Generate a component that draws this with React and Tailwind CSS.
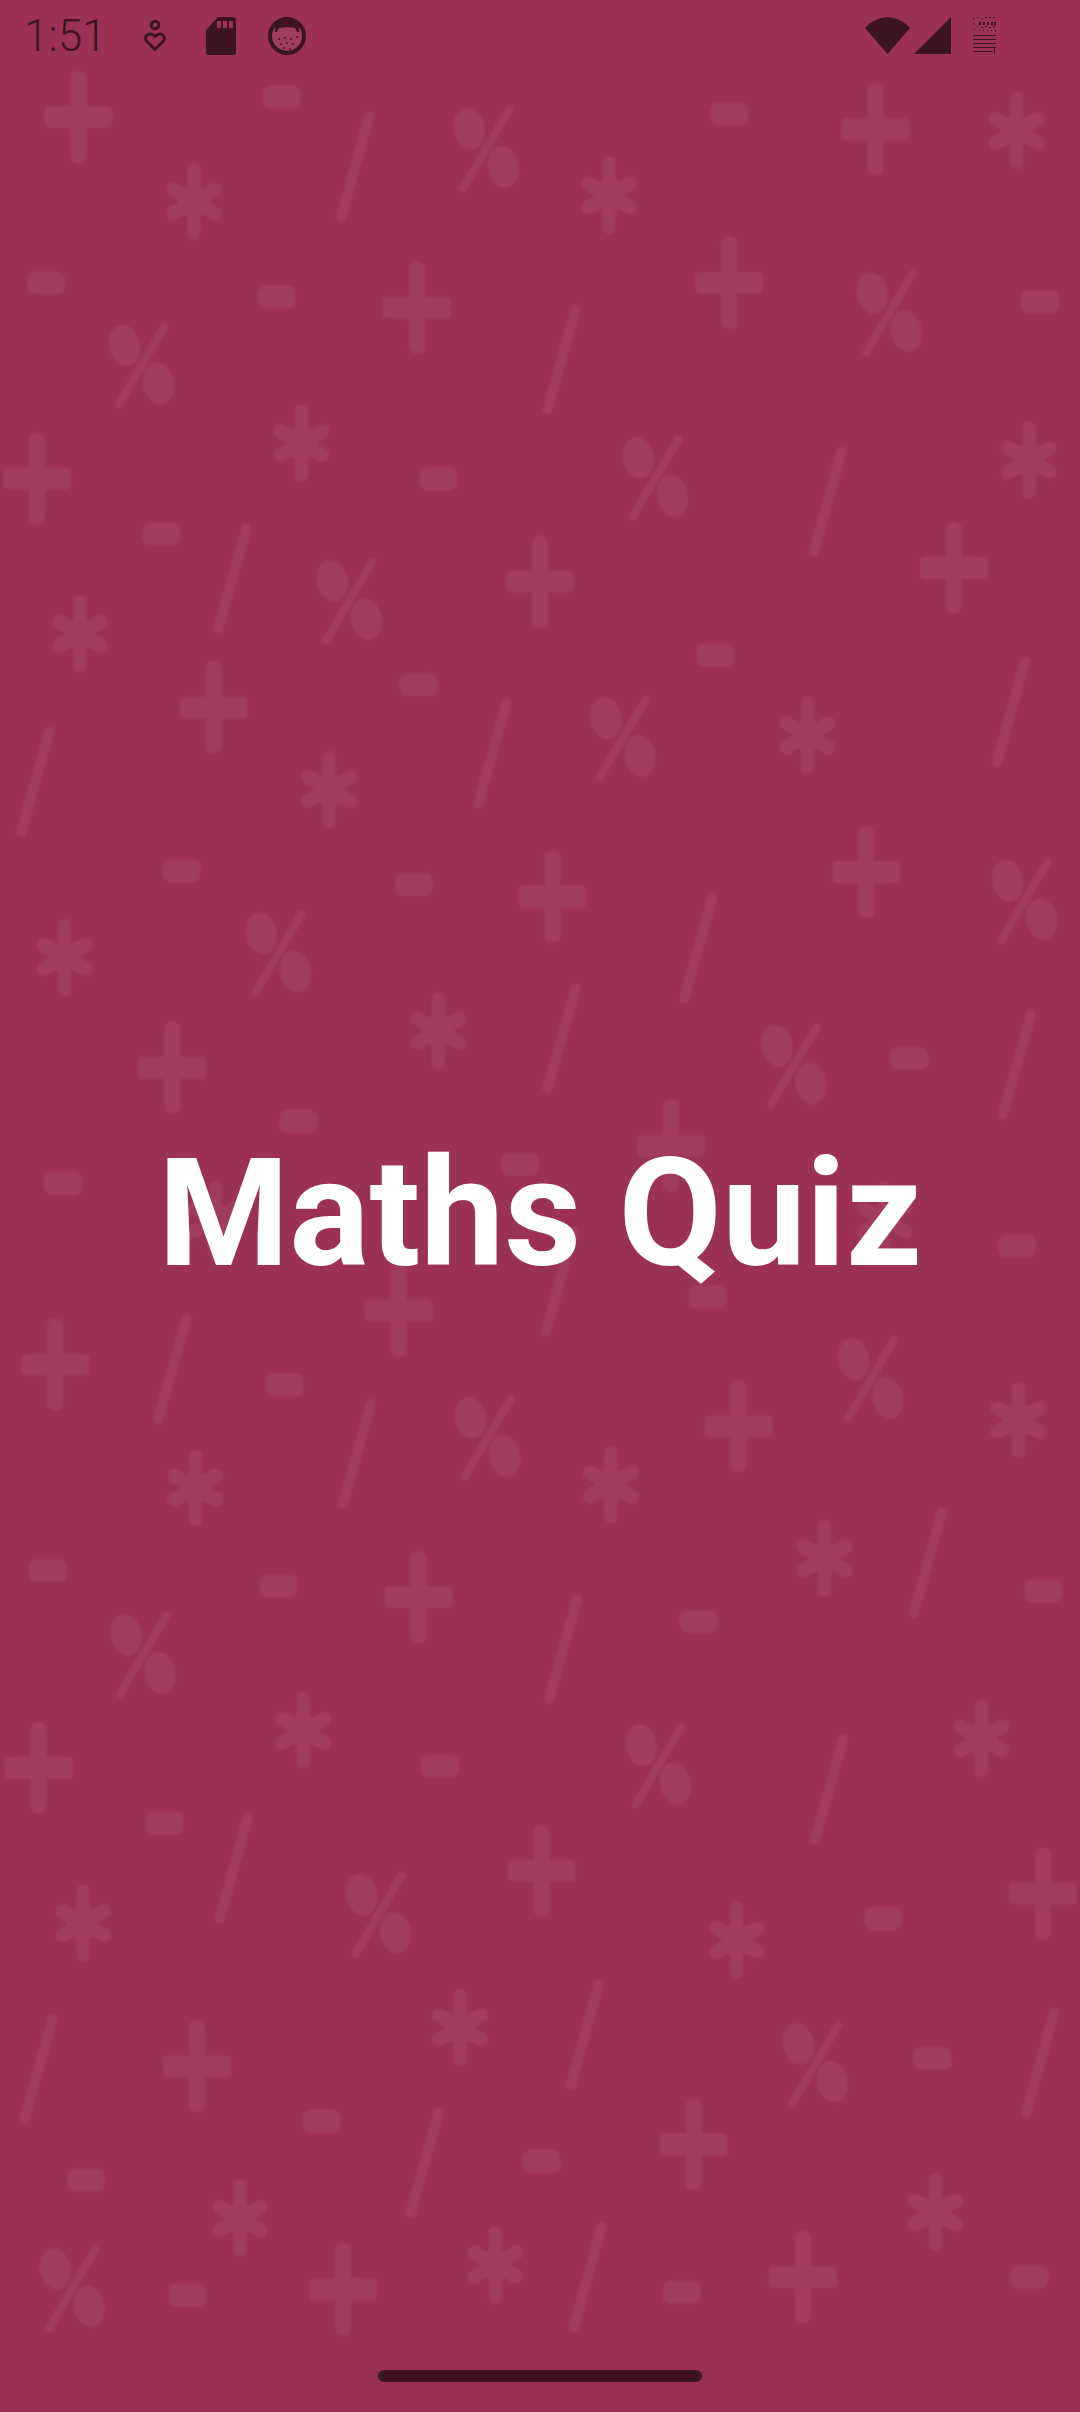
const k = 1080 / 702;
const plus = [[51,76],[569,84],[271,200],[474,184],[24,311],[351,378],[620,369],[139,460],[359,583],[563,567],[112,694],[436,745],[259,852],[36,887],[480,927],[272,1038],[25,1149],[352,1216],[678,1231],[128,1343],[451,1394],[223,1488],[522,1480]];
const minus = [[183,63],[474,74],[30,184],[180,193],[676,196],[285,311],[105,347],[272,445],[465,426],[118,566],[269,575],[591,688],[194,729],[338,757],[41,769],[661,810],[460,843],[185,900],[31,1021],[181,1031],[454,1054],[678,1034],[286,1148],[107,1185],[574,1247],[209,1379],[606,1338],[56,1417],[352,1405],[122,1492],[443,1490],[669,1480]];
const slash = [[231,108],[365,234],[538,326],[151,376],[320,490],[657,463],[23,508],[454,616],[365,675],[661,692],[112,890],[364,833],[232,945],[603,1016],[366,1072],[539,1163],[152,1214],[25,1345],[380,1323],[676,1341],[276,1406],[382,1480]];
const percent = [[316,96],[578,203],[92,237],[426,310],[227,390],[405,479],[666,585],[181,619],[516,692],[566,896],[317,934],[93,1075],[428,1147],[246,1244],[530,1341],[47,1487]];
const star = [[661,85],[126,131],[396,127],[196,288],[669,299],[52,412],[525,478],[214,513],[42,622],[285,670],[127,967],[662,923],[397,965],[536,1013],[197,1125],[638,1130],[54,1250],[479,1261],[299,1318],[156,1442],[608,1438],[322,1472],[140,793],[575,793]];

function Glyphs() {
  return (
    <svg className="absolute inset-0 blur-[1px]" width="1080" height="2412" viewBox="0 0 1080 2412" fill="#a03d5e" stroke="none">
      {plus.map(([x, y], i) => (
        <g key={i} transform={`translate(${x * k} ${y * k})`}>
          <rect x="-8" y="-46" width="16" height="92" rx="7" />
          <rect x="-34" y="-11" width="68" height="22" rx="5" />
        </g>
      ))}
      {minus.map(([x, y], i) => (
        <rect key={i} x={x * k - 19} y={y * k - 11.5} width="38" height="23" rx="8" />
      ))}
      {slash.map(([x, y], i) => (
        <path key={i} d="M14 -50 L-14 50" transform={`translate(${x * k} ${y * k})`} stroke="#a03d5e" strokeWidth="10" strokeLinecap="round" fill="none" />
      ))}
      {percent.map(([x, y], i) => (
        <g key={i} transform={`translate(${x * k} ${y * k})`}>
          <ellipse cx="-17" cy="-19" rx="15.500" ry="21" transform="rotate(-12 -17 -19)" />
          <ellipse cx="17" cy="19" rx="15.500" ry="21" transform="rotate(-12 17 19)" />
          <path d="M23 -38 L-23 40" stroke="#a03d5e" strokeWidth="8" strokeLinecap="round" />
        </g>
      ))}
      {star.map(([x, y], i) => (
        <g key={i} transform={`translate(${x * k} ${y * k})`} stroke="#a03d5e" strokeLinecap="round">
          <path d="M0 -32 L0 32" strokeWidth="13" />
          <path d="M-21 -12 L21 12 M21 -12 L-21 12" strokeWidth="14" />
          <circle r="16" stroke="none" />
        </g>
      ))}
    </svg>
  );
}

function StatusBar() {
  return (
    <div className="relative flex h-[72px] items-start text-[#3d1422]">
      <span className="ml-[24px] mt-[10px] w-[74px] font-['Roboto',sans-serif] text-[44px] leading-[52px] font-[350]">1:51</span>
      <svg className="ml-[46px] mt-[20px]" width="22" height="32" viewBox="0 0 22 32" fill="none" stroke="#3d1422" strokeWidth="3">
        <circle cx="11" cy="5" r="3.800" />
        <path d="M11 29.500 L2.500 21 C-1 16 6 11 11 16.500 C16 11 23 16 19.500 21 Z" strokeLinejoin="round" />
      </svg>
      <svg className="ml-[40px] mt-[17px]" width="30" height="38" viewBox="0 0 30 38">
        <path d="M12 0 H27 a3 3 0 0 1 3 3 V35 a3 3 0 0 1 -3 3 H3 a3 3 0 0 1 -3 -3 V13 Z" fill="#3d1422" />
        <rect x="11" y="4" width="4" height="7" fill="#9b3255" />
        <rect x="17" y="4" width="4" height="7" fill="#9b3255" />
        <rect x="23" y="4" width="4" height="7" fill="#9b3255" />
      </svg>
      <svg className="ml-[32px] mt-[17px]" width="38" height="38" viewBox="0 0 38 38">
        <circle cx="19" cy="19" r="17" fill="#a03d5e" stroke="#3d1422" strokeWidth="4" />
        <path d="M7 8 C12 1 26 1 31 8 L31 15 L29 15 L27 11 C23 10 15 10 11 11 L9 15 L7 15 Z" fill="#3d1422" />
        {[[11,22],[17,21],[23,22],[29,20],[13,27],[19,26],[25,27],[16,31],[22,32]].map(([x,y],i)=>(
          <circle key={i} cx={x} cy={y} r="0.900" fill="#3d1422" />
        ))}
      </svg>
      <svg className="ml-[559px] mt-[17px]" width="45" height="37" viewBox="0 0 45 37">
        <path d="M0 11 C13 -3.500 32 -3.500 45 11 L22.500 37 Z" fill="#3d1422" />
      </svg>
      <svg className="ml-[4px] mt-[17px]" width="37" height="37" viewBox="0 0 37 37">
        <path d="M37 0 V37 H0 Z" fill="#3d1422" />
      </svg>
      <svg className="ml-[22px] mt-[17px]" width="23" height="37" viewBox="0 0 23 37" fill="#3d1422">
        <path d="M0 1h1v1H0zM4 0h2v1H4zM8 1h2v1H8zM12 0h2v1h-2zM16 0h2v1h-2zM20 0h2v1h-2zM0 6h1v1H0z" />
        <rect x="6" y="5" width="2" height="3" /><rect x="10" y="5" width="2" height="3" /><rect x="14" y="5" width="2" height="3" /><rect x="18" y="5" width="2" height="3" /><rect x="21" y="5" width="2" height="3" />
        <path d="M4 9h1v1H4zM8 10h2v1H8zM12 9h2v1h-2zM16 10h2v1h-2zM20 9h2v1h-2zM1 12h1v1H1zM6 13h1v1H6zM10 13h1v1h-1zM14 13h1v1h-1zM18 13h1v1h-1zM22 13h1v2h-1z" />
        <rect y="18" width="23" height="1" /><rect y="22" width="23" height="1" /><rect y="26" width="23" height="1" /><rect y="30" width="23" height="1" />
        <rect y="34" width="20" height="1" /><rect x="21" y="30" width="1" height="7" />
      </svg>
    </div>
  );
}

export default function App() {
  return (
    <div className="relative flex h-[2412px] w-[1080px] flex-col overflow-hidden bg-[#9b3255]">
      <Glyphs />
      <StatusBar />
      <div className="relative flex flex-1 items-center justify-center pb-[15px]">
        <h1 className="font-['Roboto',sans-serif] text-[150px] leading-none font-bold text-white">Maths Quiz</h1>
      </div>
      <div className="relative flex h-[42px] justify-center">
        <div className="h-[12px] w-[324px] rounded-full bg-[#3d1422]" />
      </div>
    </div>
  );
}
